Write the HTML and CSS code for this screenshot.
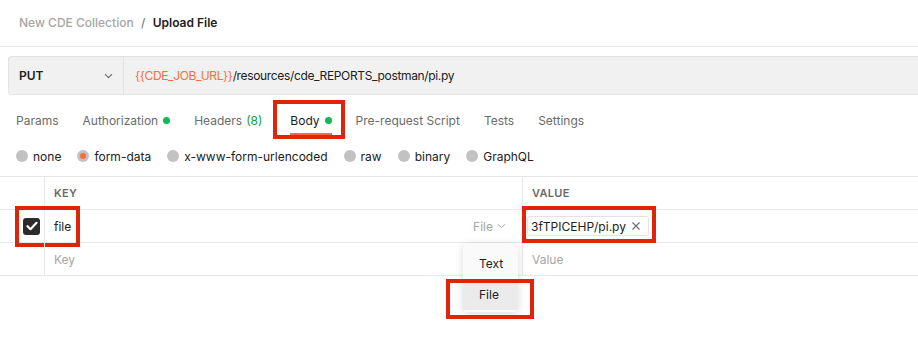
FILE: index.html
```html
<!DOCTYPE html>
<html lang="en">
<head>
  <meta charset="UTF-8">
  <title>Upload File</title>
  <link rel="stylesheet" href="styles.css">
</head>
<body>
  <div class="breadcrumb">
    <span class="crumb">New CDE Collection</span>
    <span class="slash">/</span>
    <span class="current">Upload File</span>
  </div>

  <div class="request-bar">
    <div class="method">
      <span>PUT</span>
      <svg class="chev" width="9" height="6" viewBox="0 0 9 6"><path d="M1 1.2l3.5 3.5 3.5-3.5" fill="none" stroke="#6b6b6b" stroke-width="1.1"/></svg>
    </div>
    <div class="url"><span class="var">{{CDE_JOB_URL}}</span>/resources/cde_REPORTS_postman/pi.py</div>
  </div>

  <div class="tabs">
    <div class="tab">Params</div>
    <div class="tab">Authorization <i class="dot"></i></div>
    <div class="tab">Headers <span class="count">(8)</span></div>
    <div class="tab active">Body <i class="dot"></i><span class="mark mark-body"></span></div>
    <div class="tab">Pre-request Script</div>
    <div class="tab">Tests</div>
    <div class="tab">Settings</div>
  </div>

  <div class="body-types">
    <label class="radio"><i class="circle"></i>none</label>
    <label class="radio"><i class="circle on"></i>form-data</label>
    <label class="radio"><i class="circle"></i>x-www-form-urlencoded</label>
    <label class="radio"><i class="circle"></i>raw</label>
    <label class="radio"><i class="circle"></i>binary</label>
    <label class="radio"><i class="circle"></i>GraphQL</label>
  </div>

  <div class="params">
    <div class="row head">
      <div class="cell check"></div>
      <div class="cell key">KEY</div>
      <div class="cell value">VALUE</div>
    </div>
    <div class="row">
      <div class="cell check">
        <span class="box">
          <svg width="12" height="10" viewBox="0 0 12 10"><path d="M1.5 5.2l3 3 6-6.4" fill="none" stroke="#fff" stroke-width="2.2" stroke-linecap="round" stroke-linejoin="round"/></svg>
        </span>
      </div>
      <div class="cell key">
        <span>file</span>
        <span class="type">File
          <svg width="9" height="6" viewBox="0 0 9 6"><path d="M1 1.2l3.5 3.5 3.5-3.5" fill="none" stroke="#a6a6a6" stroke-width="1"/></svg>
        </span>
      </div>
      <div class="cell value">
        <span class="chip">3fTPICEHP/pi.py
          <svg class="x" width="8" height="8" viewBox="0 0 8 8"><path d="M0.5 0.5l7 7M7.5 0.5l-7 7" stroke="#6b6b6b" stroke-width="1.1"/></svg>
        </span>
        <span class="mark mark-value"></span>
      </div>
      <span class="mark mark-key"></span>
    </div>
    <div class="row">
      <div class="cell check"></div>
      <div class="cell key placeholder">Key</div>
      <div class="cell value placeholder">Value</div>
    </div>

    <div class="menu">
      <div class="item">Text</div>
      <div class="item hover">File</div>
      <span class="mark mark-menu"></span>
    </div>
  </div>
</body>
</html>
```

FILE: styles.css
```css
* {
  box-sizing: border-box;
}

html, body {
  height: 100%;
}

body {
  margin: 0;
  min-height: 350px;
  font-family: Inter, "Noto Sans", sans-serif;
  font-size: 12px;
  color: #212121;
  background-color: #ffffff;
}

.breadcrumb {
  height: 47px;
  line-height: 45px;
  padding-left: 19px;
  border-bottom: 1px solid #e8e8e8;
}

.crumb {
  color: #a6a6a6;
  font-weight: 500;
}

.slash {
  color: #6b6b6b;
  margin: 0 4px;
}

.current {
  font-weight: 600;
  color: #212121;
}

.request-bar {
  display: flex;
  height: 39px;
  margin: 9px 0 0 8px;
  background-color: #f1f1f1;
  border: 1px solid #e3e3e3;
  border-right: none;
  border-radius: 4px 0 0 4px;
}

.method {
  width: 115px;
  padding: 0 10px 0 10px;
  display: flex;
  align-items: center;
  justify-content: space-between;
  font-weight: 600;
  border-right: 1px solid #e3e3e3;
}

.url {
  display: flex;
  align-items: center;
  padding-left: 11px;
  letter-spacing: -0.35px;
}

.url .var {
  color: #ff6c37;
}

.tabs {
  display: flex;
  height: 50px;
  padding-left: 16px;
  gap: 24px;
}

.tab {
  position: relative;
  display: flex;
  align-items: center;
  color: #6b6b6b;
}

.tab.active {
  color: #212121;
  margin-left: 4px;
}

.tab.active::after {
  content: "";
  position: absolute;
  left: 0;
  right: 0;
  bottom: 10px;
  height: 2px;
  background-color: #ff6c37;
}

.dot {
  display: inline-block;
  width: 7px;
  height: 7px;
  margin-left: 5px;
  border-radius: 50%;
  background-color: #0cbb52;
}

.count {
  color: #0a9e45;
  margin-left: 4px;
}

.body-types {
  display: flex;
  align-items: center;
  height: 22px;
  padding-left: 16px;
  gap: 16px;
}

.radio {
  display: flex;
  align-items: center;
  color: #212121;
}

.circle {
  width: 12px;
  height: 12px;
  margin-right: 5px;
  border-radius: 50%;
  background-color: #c2c2c2;
  position: relative;
}

.circle.on::after {
  content: "";
  position: absolute;
  left: 3px;
  top: 3px;
  width: 6px;
  height: 6px;
  border-radius: 50%;
  background-color: #ff6c37;
}

.params {
  position: relative;
  margin-top: 9px;
  border-top: 1px solid #e8e8e8;
}

.row {
  position: relative;
  display: grid;
  grid-template-columns: 44px 478px 1fr;
  height: 33px;
  border-bottom: 1px solid #e8e8e8;
}

.cell {
  display: flex;
  align-items: center;
}

.cell.key {
  border-left: 1px solid #e8e8e8;
  padding: 0 16px 0 9px;
  justify-content: space-between;
}

.cell.value {
  position: relative;
  border-left: 1px solid #e8e8e8;
  padding-left: 9px;
}

.head .cell {
  font-size: 11px;
  font-weight: 600;
  color: #6b6b6b;
  letter-spacing: 0.3px;
}

.check {
  justify-content: flex-end;
  padding-right: 4px;
}

.box {
  width: 17px;
  height: 17px;
  border-radius: 3px;
  background-color: #2b2b2b;
  display: flex;
  align-items: center;
  justify-content: center;
}

.type {
  color: #a6a6a6;
  display: flex;
  align-items: center;
  gap: 4px;
}

.chip {
  margin-left: -5px;
  width: 122px;
  height: 20px;
  padding: 0 8px 0 3px;
  display: flex;
  align-items: center;
  justify-content: space-between;
  border: 1px solid #e3e3e3;
  border-radius: 3px;
}

.placeholder {
  color: #a6a6a6;
}

.menu {
  position: absolute;
  left: 463px;
  top: 66px;
  width: 55px;
  padding: 5px 0 2px;
  background-color: #fafafa;
  border-radius: 4px;
  box-shadow: 0 2px 8px rgba(0, 0, 0, 0.14);
}

.item {
  height: 31px;
  line-height: 31px;
  padding-left: 16px;
}

.item.hover {
  background-color: #ebebeb;
}

.mark {
  position: absolute;
  border: 4px solid #e0230a;
  pointer-events: none;
}

.mark-body {
  left: -17px;
  right: -13px;
  top: 5px;
  bottom: 6px;
}

.mark-key {
  left: 15px;
  top: -4px;
  width: 65px;
  height: 41px;
}

.mark-value {
  left: -1px;
  top: -4px;
  width: 134px;
  height: 37px;
}

.mark-menu {
  left: -17px;
  top: 36px;
  width: 88px;
  height: 40px;
}
```
